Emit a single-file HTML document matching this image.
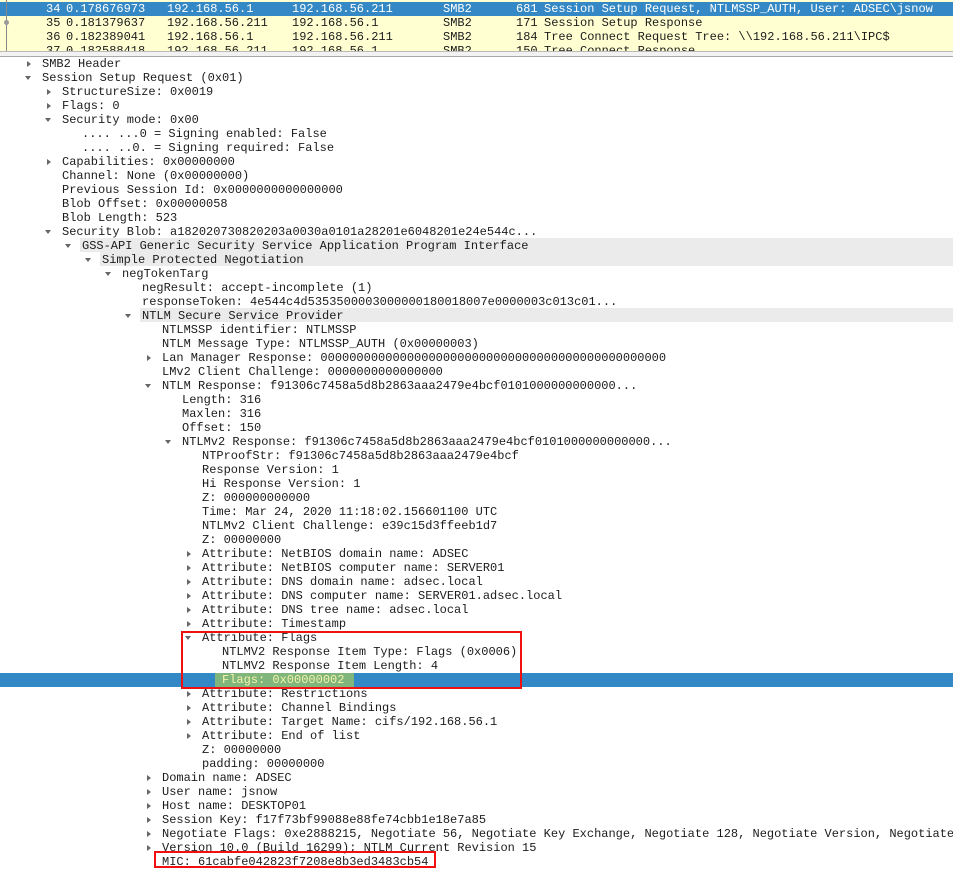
<!DOCTYPE html>
<html><head><meta charset="utf-8">
<style>
html,body{margin:0;padding:0;background:#fff;width:953px;height:869px;overflow:hidden;position:relative;
font-family:"Liberation Mono",monospace;font-size:12px;color:#1c1c1c}
.p{position:absolute;left:0;width:953px;height:14px;background:#ffffd2;white-space:pre;line-height:14px;overflow:hidden}
.p span{position:absolute;top:0}
.p.sel{background:#3388c5;color:#fff}
.r{position:absolute;height:14px;line-height:14px;white-space:pre}
.g{position:absolute;height:14px;background:#ebebeb;right:0}
.a{position:absolute;width:0;height:0}
.c{border-top:3px solid transparent;border-bottom:3px solid transparent;border-left:4px solid #666}
.e{border-left:3.5px solid transparent;border-right:3.5px solid transparent;border-top:4px solid #666}
.box{position:absolute;border:2px solid #f01010;box-sizing:border-box}
#t{position:absolute;left:0;top:0;width:953px;height:869px;overflow:hidden}
</style></head><body>
<div style="position:absolute;left:0;top:0;width:953px;height:2px;background:#ffffd2"></div>
<div class="p sel" style="top:2px"><span style="left:46px">34</span><span style="left:66px">0.178676973</span><span style="left:167px">192.168.56.1</span><span style="left:292px">192.168.56.211</span><span style="left:443px">SMB2</span><span style="left:516px">681</span><span style="left:544px">Session Setup Request, NTLMSSP_AUTH, User: ADSEC\jsnow</span></div>
<div class="p" style="top:16px"><span style="left:46px">35</span><span style="left:66px">0.181379637</span><span style="left:167px">192.168.56.211</span><span style="left:292px">192.168.56.1</span><span style="left:443px">SMB2</span><span style="left:516px">171</span><span style="left:544px">Session Setup Response</span></div>
<div class="p" style="top:30px"><span style="left:46px">36</span><span style="left:66px">0.182389041</span><span style="left:167px">192.168.56.1</span><span style="left:292px">192.168.56.211</span><span style="left:443px">SMB2</span><span style="left:516px">184</span><span style="left:544px">Tree Connect Request Tree: \\192.168.56.211\IPC$</span></div>
<div class="p" style="top:44px;height:8px"><span style="left:46px">37</span><span style="left:66px">0.182588418</span><span style="left:167px">192.168.56.211</span><span style="left:292px">192.168.56.1</span><span style="left:443px">SMB2</span><span style="left:516px">150</span><span style="left:544px">Tree Connect Response</span></div>
<div style="position:absolute;left:6px;top:0;width:1px;height:52px;background:#888"></div>
<div style="position:absolute;left:4px;top:20px;width:5px;height:5px;border-radius:3px;background:#999"></div>
<div style="position:absolute;left:0;top:51px;width:953px;height:1px;background:#bbb"></div>
<div style="position:absolute;left:0;top:52px;width:953px;height:4px;background:#f2f2f2"></div>
<div style="position:absolute;left:0;top:56px;width:953px;height:1px;background:#aaa"></div>
<div id="t"></div>
<div style="position:absolute;left:0;top:673px;width:953px;height:14px;background:#3389c6"></div>
<div style="position:absolute;left:215px;top:673px;width:139px;height:14px;background:#80b57c"></div>
<div class="r" style="left:222px;top:673px;color:#f4f4a8">Flags: 0x00000002</div>
<script>
var rows=[
[0,'c','SMB2 Header'],
[0,'e','Session Setup Request (0x01)'],
[1,'c','StructureSize: 0x0019'],
[1,'c','Flags: 0'],
[1,'e','Security mode: 0x00'],
[2,'','.... ...0 = Signing enabled: False'],
[2,'','.... ..0. = Signing required: False'],
[1,'c','Capabilities: 0x00000000'],
[1,'','Channel: None (0x00000000)'],
[1,'','Previous Session Id: 0x0000000000000000'],
[1,'','Blob Offset: 0x00000058'],
[1,'','Blob Length: 523'],
[1,'e','Security Blob: a182020730820203a0030a0101a28201e6048201e24e544c...'],
[2,'e','GSS-API Generic Security Service Application Program Interface',1],
[3,'e','Simple Protected Negotiation',1],
[4,'e','negTokenTarg'],
[5,'','negResult: accept-incomplete (1)'],
[5,'','responseToken: 4e544c4d5353500003000000180018007e0000003c013c01...'],
[5,'e','NTLM Secure Service Provider',1],
[6,'','NTLMSSP identifier: NTLMSSP'],
[6,'','NTLM Message Type: NTLMSSP_AUTH (0x00000003)'],
[6,'c','Lan Manager Response: 000000000000000000000000000000000000000000000000'],
[6,'','LMv2 Client Challenge: 0000000000000000'],
[6,'e','NTLM Response: f91306c7458a5d8b2863aaa2479e4bcf0101000000000000...'],
[7,'','Length: 316'],
[7,'','Maxlen: 316'],
[7,'','Offset: 150'],
[7,'e','NTLMv2 Response: f91306c7458a5d8b2863aaa2479e4bcf0101000000000000...'],
[8,'','NTProofStr: f91306c7458a5d8b2863aaa2479e4bcf'],
[8,'','Response Version: 1'],
[8,'','Hi Response Version: 1'],
[8,'','Z: 000000000000'],
[8,'','Time: Mar 24, 2020 11:18:02.156601100 UTC'],
[8,'','NTLMv2 Client Challenge: e39c15d3ffeeb1d7'],
[8,'','Z: 00000000'],
[8,'c','Attribute: NetBIOS domain name: ADSEC'],
[8,'c','Attribute: NetBIOS computer name: SERVER01'],
[8,'c','Attribute: DNS domain name: adsec.local'],
[8,'c','Attribute: DNS computer name: SERVER01.adsec.local'],
[8,'c','Attribute: DNS tree name: adsec.local'],
[8,'c','Attribute: Timestamp'],
[8,'e','Attribute: Flags'],
[9,'','NTLMV2 Response Item Type: Flags (0x0006)'],
[9,'','NTLMV2 Response Item Length: 4'],
null,
[8,'c','Attribute: Restrictions'],
[8,'c','Attribute: Channel Bindings'],
[8,'c','Attribute: Target Name: cifs/192.168.56.1'],
[8,'c','Attribute: End of list'],
[8,'','Z: 00000000'],
[8,'','padding: 00000000'],
[6,'c','Domain name: ADSEC'],
[6,'c','User name: jsnow'],
[6,'c','Host name: DESKTOP01'],
[6,'c','Session Key: f17f73bf99088e88fe74cbb1e18e7a85'],
[6,'c','Negotiate Flags: 0xe2888215, Negotiate 56, Negotiate Key Exchange, Negotiate 128, Negotiate Version, Negotiate Target Info'],
[6,'c','Version 10.0 (Build 16299); NTLM Current Revision 15'],
[6,'','MIC: 61cabfe042823f7208e8b3ed3483cb54']
];
var h='';
rows.forEach(function(r,i){
 if(!r)return;
 var top=57+i*14, x=42+r[0]*20;
 if(r[3]) h+='<div class="g" style="left:'+(x-2)+'px;top:'+(top-1)+'px"></div>';
 if(r[1]=='c') h+='<div class="a c" style="left:'+(x-15)+'px;top:'+(top+4)+'px"></div>';
 if(r[1]=='e') h+='<div class="a e" style="left:'+(x-17)+'px;top:'+(top+5)+'px"></div>';
 h+='<div class="r" style="left:'+x+'px;top:'+top+'px">'+r[2].replace(/&/g,'&amp;').replace(/</g,'&lt;')+'</div>';
});
document.getElementById('t').innerHTML=h;
</script>
<div class="box" style="left:181px;top:631px;width:341px;height:58px"></div>
<div class="box" style="left:154px;top:851px;width:282px;height:17px"></div>
</body></html>
